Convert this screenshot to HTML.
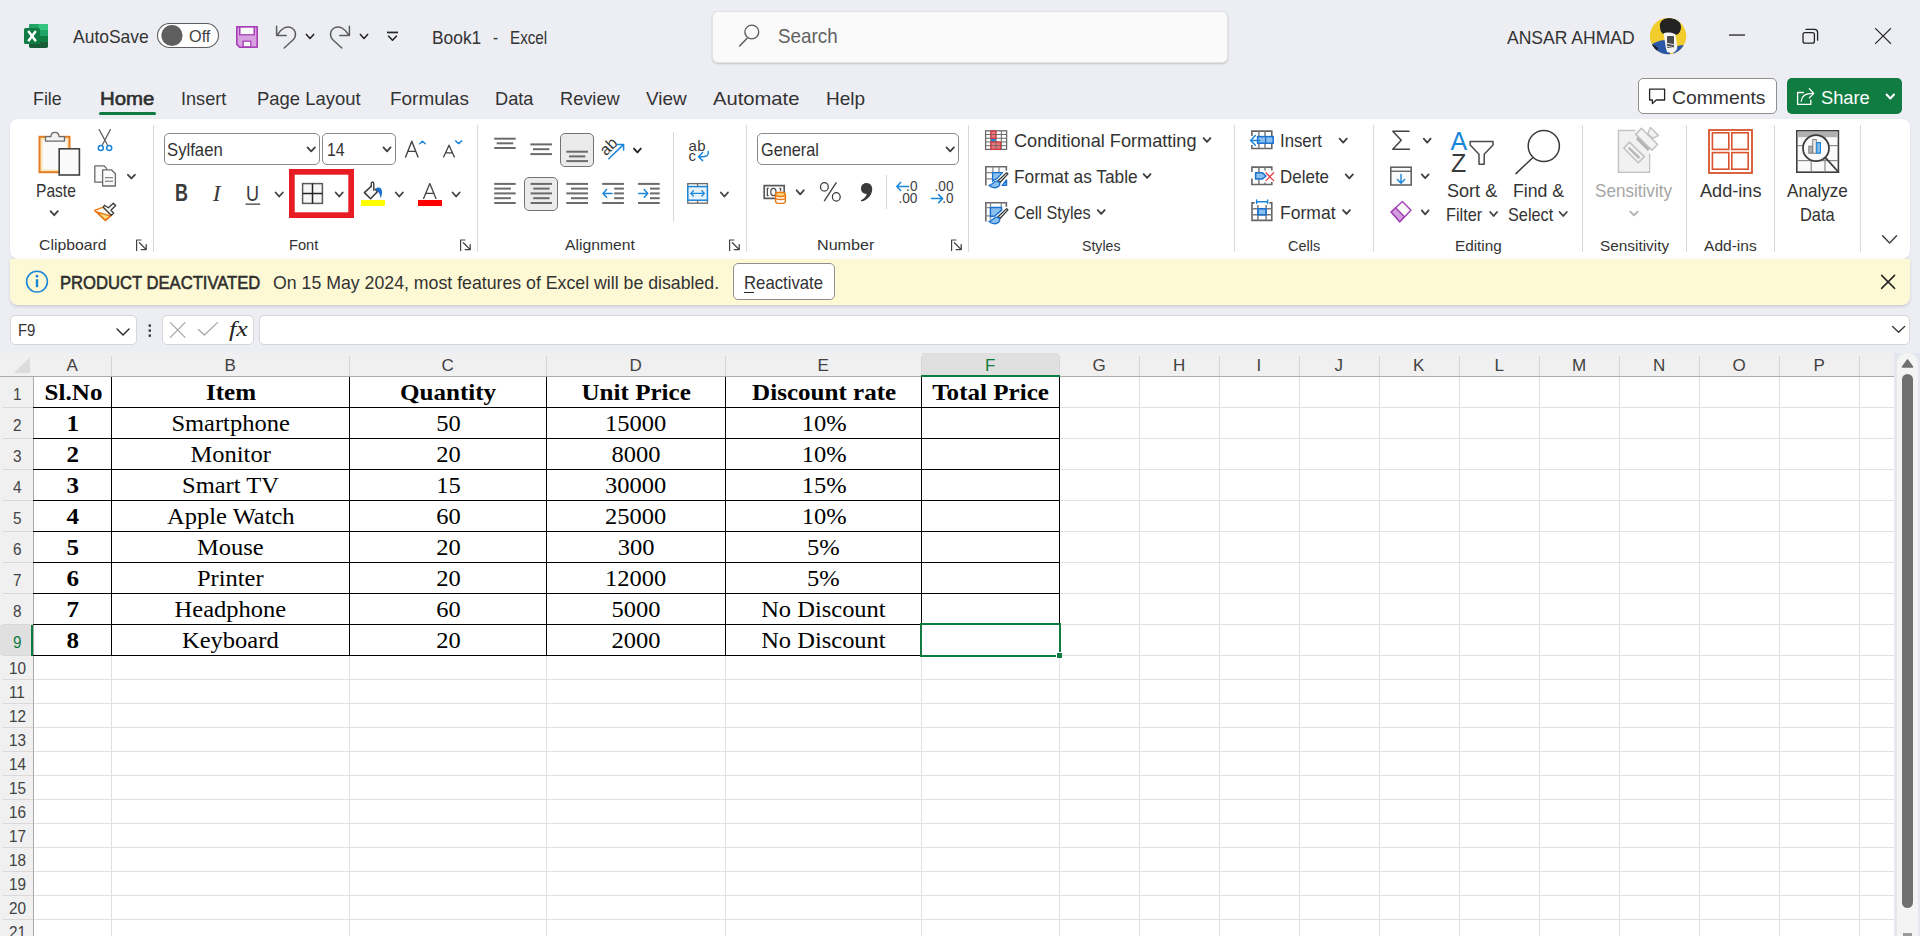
<!DOCTYPE html>
<html><head><meta charset="utf-8"><title>Book1 - Excel</title>
<style>
html,body{margin:0;padding:0;}
body{width:1920px;height:936px;overflow:hidden;position:relative;background:#edeef3;font-family:"Liberation Sans",sans-serif;}
#bg div{position:absolute;box-sizing:border-box;}
.t{position:absolute;white-space:pre;}
svg{position:absolute;left:0;top:0;}
</style></head><body>
<div id="bg">
<div style="left:712px;top:11px;width:516px;height:52px;background:#fafafa;border:1px solid #e3e3e3;border-radius:6px;box-shadow:0 1px 2px rgba(0,0,0,0.18);"></div>
<div style="left:1638px;top:78px;width:139px;height:36px;background:#fff;border:1px solid #8f8f8f;border-radius:5px;"></div>
<div style="left:1787px;top:78px;width:115px;height:36px;background:#107c41;border-radius:5px;"></div>
<div style="left:10px;top:119px;width:1900px;height:140px;background:#fff;border-radius:8px;box-shadow:0 1px 2px rgba(0,0,0,0.10);"></div>
<div style="left:10px;top:259px;width:1900px;height:46px;background:#fef9d5;border-radius:0 0 8px 8px;box-shadow:0 1.5px 3px rgba(0,0,0,0.13);"></div>
<div style="left:733px;top:263px;width:102px;height:37px;background:#fff;border:1px solid #8f8f8f;border-radius:5px;"></div>
<div style="left:10px;top:315px;width:127px;height:30px;background:#fff;border:1px solid #d6d6d6;border-radius:5px;"></div>
<div style="left:162px;top:315px;width:92px;height:30px;background:#fff;border:1px solid #d6d6d6;border-radius:5px;"></div>
<div style="left:259px;top:315px;width:1651px;height:30px;background:#fff;border:1px solid #d6d6d6;border-radius:5px;"></div>
<div style="left:1894px;top:353px;width:26px;height:583px;background:#e4e8ee;"></div>
<div style="left:1897px;top:353px;width:21px;height:583px;background:#f4f4f4;border-radius:10px 10px 0 0;"></div>
<div style="left:1902px;top:374px;width:11px;height:534px;background:#707070;border-radius:6px;"></div>
<div style="left:164px;top:133px;width:156px;height:32px;background:#fff;border:1px solid #8a8a8a;border-radius:5px;"></div>
<div style="left:322px;top:133px;width:74px;height:32px;background:#fff;border:1px solid #8a8a8a;border-radius:5px;"></div>
<div style="left:560px;top:133px;width:34px;height:34px;background:#ebebeb;border:1px solid #737373;border-radius:5px;"></div>
<div style="left:524px;top:177px;width:34px;height:34px;background:#ebebeb;border:1px solid #737373;border-radius:5px;"></div>
<div style="left:757px;top:133px;width:202px;height:32px;background:#fff;border:1px solid #8a8a8a;border-radius:5px;"></div>
</div>
<svg width="1920" height="936" viewBox="0 0 1920 936">
<rect x="0" y="353" width="1894" height="23" fill="#f0f0f0" />
<rect x="0" y="377" width="33" height="559" fill="#f0f0f0" />
<rect x="34" y="377" width="1860" height="559" fill="#ffffff" />
<rect x="922" y="353" width="137" height="22" fill="#e0e0e0" />
<rect x="0" y="625" width="32" height="30" fill="#e0e0e0" />
<path d="M30 357 L30 373 L14 373 Z" fill="#dcdcdc"/>
<rect x="111" y="377" width="1" height="559" fill="#e1e1e1" />
<rect x="111" y="356" width="1" height="20" fill="#d6d6d6" />
<rect x="349" y="377" width="1" height="559" fill="#e1e1e1" />
<rect x="349" y="356" width="1" height="20" fill="#d6d6d6" />
<rect x="546" y="377" width="1" height="559" fill="#e1e1e1" />
<rect x="546" y="356" width="1" height="20" fill="#d6d6d6" />
<rect x="725" y="377" width="1" height="559" fill="#e1e1e1" />
<rect x="725" y="356" width="1" height="20" fill="#d6d6d6" />
<rect x="921" y="377" width="1" height="559" fill="#e1e1e1" />
<rect x="921" y="356" width="1" height="20" fill="#d6d6d6" />
<rect x="1059" y="377" width="1" height="559" fill="#e1e1e1" />
<rect x="1059" y="356" width="1" height="20" fill="#d6d6d6" />
<rect x="1139" y="377" width="1" height="559" fill="#e1e1e1" />
<rect x="1139" y="356" width="1" height="20" fill="#d6d6d6" />
<rect x="1219" y="377" width="1" height="559" fill="#e1e1e1" />
<rect x="1219" y="356" width="1" height="20" fill="#d6d6d6" />
<rect x="1299" y="377" width="1" height="559" fill="#e1e1e1" />
<rect x="1299" y="356" width="1" height="20" fill="#d6d6d6" />
<rect x="1379" y="377" width="1" height="559" fill="#e1e1e1" />
<rect x="1379" y="356" width="1" height="20" fill="#d6d6d6" />
<rect x="1459" y="377" width="1" height="559" fill="#e1e1e1" />
<rect x="1459" y="356" width="1" height="20" fill="#d6d6d6" />
<rect x="1539" y="377" width="1" height="559" fill="#e1e1e1" />
<rect x="1539" y="356" width="1" height="20" fill="#d6d6d6" />
<rect x="1619" y="377" width="1" height="559" fill="#e1e1e1" />
<rect x="1619" y="356" width="1" height="20" fill="#d6d6d6" />
<rect x="1699" y="377" width="1" height="559" fill="#e1e1e1" />
<rect x="1699" y="356" width="1" height="20" fill="#d6d6d6" />
<rect x="1779" y="377" width="1" height="559" fill="#e1e1e1" />
<rect x="1779" y="356" width="1" height="20" fill="#d6d6d6" />
<rect x="1859" y="377" width="1" height="559" fill="#e1e1e1" />
<rect x="1859" y="356" width="1" height="20" fill="#d6d6d6" />
<rect x="34" y="407" width="1860" height="1" fill="#e1e1e1" />
<rect x="3" y="407" width="30" height="1" fill="#d9d9d9" />
<rect x="34" y="438" width="1860" height="1" fill="#e1e1e1" />
<rect x="3" y="438" width="30" height="1" fill="#d9d9d9" />
<rect x="34" y="469" width="1860" height="1" fill="#e1e1e1" />
<rect x="3" y="469" width="30" height="1" fill="#d9d9d9" />
<rect x="34" y="500" width="1860" height="1" fill="#e1e1e1" />
<rect x="3" y="500" width="30" height="1" fill="#d9d9d9" />
<rect x="34" y="531" width="1860" height="1" fill="#e1e1e1" />
<rect x="3" y="531" width="30" height="1" fill="#d9d9d9" />
<rect x="34" y="562" width="1860" height="1" fill="#e1e1e1" />
<rect x="3" y="562" width="30" height="1" fill="#d9d9d9" />
<rect x="34" y="593" width="1860" height="1" fill="#e1e1e1" />
<rect x="3" y="593" width="30" height="1" fill="#d9d9d9" />
<rect x="34" y="624" width="1860" height="1" fill="#e1e1e1" />
<rect x="3" y="624" width="30" height="1" fill="#d9d9d9" />
<rect x="34" y="655" width="1860" height="1" fill="#e1e1e1" />
<rect x="3" y="655" width="30" height="1" fill="#d9d9d9" />
<rect x="34" y="679" width="1860" height="1" fill="#e1e1e1" />
<rect x="3" y="679" width="30" height="1" fill="#d9d9d9" />
<rect x="34" y="703" width="1860" height="1" fill="#e1e1e1" />
<rect x="3" y="703" width="30" height="1" fill="#d9d9d9" />
<rect x="34" y="727" width="1860" height="1" fill="#e1e1e1" />
<rect x="3" y="727" width="30" height="1" fill="#d9d9d9" />
<rect x="34" y="751" width="1860" height="1" fill="#e1e1e1" />
<rect x="3" y="751" width="30" height="1" fill="#d9d9d9" />
<rect x="34" y="775" width="1860" height="1" fill="#e1e1e1" />
<rect x="3" y="775" width="30" height="1" fill="#d9d9d9" />
<rect x="34" y="799" width="1860" height="1" fill="#e1e1e1" />
<rect x="3" y="799" width="30" height="1" fill="#d9d9d9" />
<rect x="34" y="823" width="1860" height="1" fill="#e1e1e1" />
<rect x="3" y="823" width="30" height="1" fill="#d9d9d9" />
<rect x="34" y="847" width="1860" height="1" fill="#e1e1e1" />
<rect x="3" y="847" width="30" height="1" fill="#d9d9d9" />
<rect x="34" y="871" width="1860" height="1" fill="#e1e1e1" />
<rect x="3" y="871" width="30" height="1" fill="#d9d9d9" />
<rect x="34" y="895" width="1860" height="1" fill="#e1e1e1" />
<rect x="3" y="895" width="30" height="1" fill="#d9d9d9" />
<rect x="34" y="919" width="1860" height="1" fill="#e1e1e1" />
<rect x="3" y="919" width="30" height="1" fill="#d9d9d9" />
<rect x="0" y="376" width="1894" height="1" fill="#ababab" />
<rect x="33" y="376" width="1" height="560" fill="#ababab" />
<rect x="111" y="377" width="1" height="279" fill="#000" />
<rect x="349" y="377" width="1" height="279" fill="#000" />
<rect x="546" y="377" width="1" height="279" fill="#000" />
<rect x="725" y="377" width="1" height="279" fill="#000" />
<rect x="921" y="377" width="1" height="279" fill="#000" />
<rect x="1059" y="377" width="1" height="279" fill="#000" />
<rect x="33" y="407" width="1027" height="1" fill="#000" />
<rect x="33" y="438" width="1027" height="1" fill="#000" />
<rect x="33" y="469" width="1027" height="1" fill="#000" />
<rect x="33" y="500" width="1027" height="1" fill="#000" />
<rect x="33" y="531" width="1027" height="1" fill="#000" />
<rect x="33" y="562" width="1027" height="1" fill="#000" />
<rect x="33" y="593" width="1027" height="1" fill="#000" />
<rect x="33" y="624" width="1027" height="1" fill="#000" />
<rect x="33" y="655" width="1027" height="1" fill="#000" />
<rect x="921" y="375" width="139" height="2" fill="#107c41" />
<rect x="31" y="625" width="2" height="31" fill="#107c41" />
<rect x="921" y="624" width="139" height="32" fill="none" stroke="#107c41" stroke-width="2"/>
<rect x="1057" y="653" width="5" height="5" fill="#107c41" />
<rect x="1056" y="652" width="7" height="1" fill="#ffffff" />
<rect x="1056" y="652" width="1" height="7" fill="#ffffff" />
<path d="M1907.5 360 L1912.5 367 L1902.5 367 Z" fill="#707070" stroke="#707070" stroke-width="1.6" stroke-linejoin="round"/>
<rect x="1903" y="933" width="9" height="3" fill="#9a9a9a" />
<rect x="99" y="112" width="57" height="3" fill="#107c41" rx="1.5"/>
<rect x="744" y="292" width="10" height="1" fill="#242424" />
<rect x="29" y="24" width="19" height="24" rx="1.8" fill="#185c37"/>
<path d="M30.8 24 H46.2 C47.2 24 48 24.8 48 25.8 V30 H29 V25.8 C29 24.8 29.8 24 30.8 24 Z" fill="#21a366"/>
<path d="M38.6 24 H46.2 C47.2 24 48 24.8 48 25.8 V30 H38.6 Z" fill="#33c481"/>
<rect x="29" y="30" width="19" height="6" fill="#21a366"/>
<rect x="29" y="36" width="19" height="6" fill="#107c41"/>
<rect x="24" y="28" width="16" height="16" rx="1.6" fill="#107c41"/>
<path d="M28.2 31 L35.9 41.2 M35.9 31 L28.2 41.2" stroke="#fff" stroke-width="2.5" stroke-linecap="butt"/>
<rect x="157.5" y="23.5" width="61" height="24" rx="12" fill="#fff" stroke="#5e5e5e" stroke-width="1.1"/>
<circle cx="172" cy="35.5" r="10.6" fill="#5f5f5f"/>
<path d="M236.8 26.8 H257.2 V47.2 H239.6 L236.8 44.4 Z" fill="#d8a1df" stroke="#a63db6" stroke-width="1.6" stroke-linejoin="round"/>
<rect x="240.8" y="27.6" width="12.4" height="6.6" fill="#fafafa"/>
<rect x="239.6" y="26.8" width="14.8" height="8" fill="none" stroke="#a63db6" stroke-width="1.2"/>
<rect x="242.4" y="40.6" width="9" height="6.6" fill="#a63db6"/>
<rect x="243.8" y="41.8" width="6.4" height="4.4" fill="#fafafa"/>
<path d="M276.6 26.2 V35.4 H286.2 M277.6 34.6 C281.5 28.2 287 25.6 291.2 27.6 C296.4 30.2 296.6 36.4 293.2 39.8 L284.2 48" fill="none" stroke="#5c5c5c" stroke-width="1.5" stroke-linecap="round" stroke-linejoin="round" />
<g transform="translate(626,0) scale(-1,1)"><path d="M276.6 26.2 V35.4 H286.2 M277.6 34.6 C281.5 28.2 287 25.6 291.2 27.6 C296.4 30.2 296.6 36.4 293.2 39.8 L284.2 48" fill="none" stroke="#5c5c5c" stroke-width="1.5" stroke-linecap="round" stroke-linejoin="round"/></g>
<path d="M306.39 34.40 L310.00 38.40 L313.61 34.40" fill="none" stroke="#242424" stroke-width="1.56" stroke-linecap="round" stroke-linejoin="round"/>
<path d="M360.39 34.40 L364.00 38.40 L367.61 34.40" fill="none" stroke="#242424" stroke-width="1.56" stroke-linecap="round" stroke-linejoin="round"/>
<rect x="387" y="31.6" width="11" height="1.7" fill="#242424"/>
<path d="M388.63 36.20 L392.50 40.20 L396.37 36.20" fill="none" stroke="#242424" stroke-width="1.56" stroke-linecap="round" stroke-linejoin="round"/>
<circle cx="751.8" cy="32" r="6.9" fill="none" stroke="#5c5c5c" stroke-width="1.4"/>
<path d="M739.6 46 L746.9 38.5" fill="none" stroke="#5c5c5c" stroke-width="1.5" stroke-linecap="round" stroke-linejoin="round" />
<clipPath id="av"><circle cx="1668.1" cy="36.1" r="18.2"/></clipPath>
<g clip-path="url(#av)"><rect x="1649" y="17" width="38" height="38" fill="#f2cb2c"/><path d="M1650 45 C1654 43 1660 40 1665 40 L1671 56 L1650 56 Z" fill="#2c56a8"/><path d="M1650 45 C1652 44 1655 45 1658 48 L1656 56 L1650 56 Z" fill="#1c1c2a"/><path d="M1674 47 C1678 45.5 1682 45 1686 45.5 L1687 56 L1673 56 Z" fill="#2c56a8"/><path d="M1660 27 C1659 21 1664 18 1670 18 C1677 18 1681 22 1681 27 C1681 32 1678 35 1675 35 C1672 33 1666 33 1663 34 C1661 32 1660 30 1660 27 Z" fill="#232323"/><path d="M1663.5 33.5 C1666 32 1672 32 1675.5 34.5 L1677 45 C1678 49 1676 52 1672 53 L1667 52 C1665 46 1665 40 1663.5 33.5 Z" fill="#f4f4f4"/><rect x="1667" y="36" width="7" height="12" rx="1" fill="#4a4a4a"/><path d="M1666 43 L1675 45 M1666 46 L1675 48" stroke="#dcdcdc" stroke-width="1.2"/></g>
<rect x="1729" y="34.4" width="16" height="1.3" fill="#242424"/>
<rect x="1803" y="32.6" width="11.4" height="10.6" rx="2" fill="none" stroke="#242424" stroke-width="1.3"/>
<path d="M1806 29.4 H1814.6 C1816.6 29.4 1817.6 30.6 1817.6 32.4 V40.2" fill="none" stroke="#242424" stroke-width="1.3" stroke-linecap="round" stroke-linejoin="round" />
<path d="M1875.6 28.6 L1890.6 43.4 M1890.6 28.6 L1875.6 43.4" fill="none" stroke="#242424" stroke-width="1.3" stroke-linecap="round" stroke-linejoin="round" />
<path d="M1649.6 89.2 H1664.6 V100 H1656.2 L1652.4 103.6 V100 H1649.6 Z" fill="none" stroke="#242424" stroke-width="1.3" stroke-linecap="round" stroke-linejoin="round" />
<path d="M1803.5 92.5 H1797.6 V104.4 H1810.8 V100.2" fill="none" stroke="#fff" stroke-width="1.3" stroke-linecap="round" stroke-linejoin="round" />
<path d="M1801.2 101.2 C1801.6 95.8 1805.4 93.4 1812.6 93.4" fill="none" stroke="#fff" stroke-width="1.3" stroke-linecap="round" stroke-linejoin="round" />
<path d="M1809.4 88.8 L1813.8 93.4 L1809.4 97.8" fill="none" stroke="#fff" stroke-width="1.3" stroke-linecap="round" stroke-linejoin="round" />
<path d="M1886.60 94.50 L1890.30 98.50 L1894.00 94.50" fill="none" stroke="#fff" stroke-width="1.95" stroke-linecap="round" stroke-linejoin="round"/>
<rect x="39.5" y="136.8" width="30" height="35.4" fill="#fde6b8" stroke="#e27c22" stroke-width="2"/>
<rect x="42.6" y="139.8" width="24" height="29.6" fill="#fafafa"/>
<path d="M45.5 141.2 V136.6 H51 C51 131 59 131 59 136.6 H64.5 V141.2 Z" fill="#f2f2f2" stroke="#6a6a6a" stroke-width="1.3" stroke-linejoin="round"/>
<rect x="59.2" y="148.8" width="20.2" height="26.2" fill="#fafafa" stroke="#424242" stroke-width="1.6"/>
<path d="M50.59 211.20 L54.20 215.20 L57.81 211.20" fill="none" stroke="#424242" stroke-width="1.82" stroke-linecap="round" stroke-linejoin="round"/>
<path d="M99.2 129.6 L107.6 145.2 M110.4 129.6 L102.2 145.2" fill="none" stroke="#5c5c5c" stroke-width="1.2" stroke-linecap="round" stroke-linejoin="round" />
<circle cx="100.8" cy="147.9" r="2.5" fill="none" stroke="#1a86d9" stroke-width="1.5"/>
<circle cx="109.2" cy="147.9" r="2.5" fill="none" stroke="#1a86d9" stroke-width="1.5"/>
<path d="M102 182.2 H94.8 V165.8 H104 L106.6 168.4 V170" fill="#fafafa" stroke="#6a6a6a" stroke-width="1.3" stroke-linejoin="round"/>
<path d="M102.6 169.8 H111.4 L115.4 173.8 V186 H102.6 Z" fill="#fafafa" stroke="#6a6a6a" stroke-width="1.3" stroke-linejoin="round"/>
<rect x="105" y="177" width="8" height="1.3" fill="#8a8a8a"/><rect x="105" y="180.6" width="8" height="1.3" fill="#8a8a8a"/>
<path d="M127.96 174.76 L131.40 178.44 L134.84 174.76" fill="none" stroke="#424242" stroke-width="1.82" stroke-linecap="round" stroke-linejoin="round"/>
<path d="M94.6 210.4 L103.3 207.2 L111.4 215.4 L105.3 220.6 Z" fill="#fdfdfd" stroke="#e8780f" stroke-width="1.4" stroke-linejoin="round"/>
<path d="M96.6 212 L110.4 215.8 L105.4 220 Z" fill="#fbe08a" stroke="#e8780f" stroke-width="1.3" stroke-linejoin="round"/>
<path d="M103.3 207.2 L104.4 205.2 L108.4 207.8 L113.3 203.2 L115.7 205.5 L110.9 210.3 L113.6 213 L111.4 215.4 Z" fill="#fafafa" stroke="#3a3a3a" stroke-width="1.3" stroke-linejoin="round"/>
<path d="M136.6 250.6 V240.0 H141" fill="none" stroke="#424242" stroke-width="1.2" stroke-linecap="round" stroke-linejoin="round" />
<path d="M139.4 242.8 L146.2 249.6 M146.2 244.6 V249.6 H141.2" fill="none" stroke="#424242" stroke-width="1.3" stroke-linecap="round" stroke-linejoin="round" />
<rect x="153" y="125" width="1" height="127" fill="#d9d9d9"/>
<path d="M307.50 147.40 L311.20 151.40 L314.90 147.40" fill="none" stroke="#424242" stroke-width="1.82" stroke-linecap="round" stroke-linejoin="round"/>
<path d="M383.47 147.40 L387.00 151.40 L390.53 147.40" fill="none" stroke="#424242" stroke-width="1.82" stroke-linecap="round" stroke-linejoin="round"/>
<path d="M405.6 157 L411.8 141.2 L418 157 M407.9 151.4 H415.7" fill="none" stroke="#424242" stroke-width="1.4" stroke-linecap="round" stroke-linejoin="round" />
<path d="M419.7 143.8 L422.5 141.2 L425.3 143.8" fill="none" stroke="#1a86d9" stroke-width="1.4" stroke-linecap="round" stroke-linejoin="round" />
<path d="M443.6 157 L449 145.2 L454.4 157 M445.5 152.8 H452.5" fill="none" stroke="#424242" stroke-width="1.3" stroke-linecap="round" stroke-linejoin="round" />
<path d="M455.6 140.9 L458.7 143.6 L461.8 140.9" fill="none" stroke="#1a86d9" stroke-width="1.4" stroke-linecap="round" stroke-linejoin="round" />
<rect x="245.6" y="203.4" width="14.6" height="1.5" fill="#5c5c5c"/>
<path d="M275.59 192.50 L279.20 196.50 L282.81 192.50" fill="none" stroke="#424242" stroke-width="1.82" stroke-linecap="round" stroke-linejoin="round"/>
<rect x="291.85" y="171.85" width="59.3" height="43.3" fill="none" stroke="#e81c25" stroke-width="5.7"/>
<rect x="302.6" y="183.6" width="19.8" height="19.8" fill="#f7f7f7" stroke="#5a5a5a" stroke-width="1.5"/>
<path d="M312.5 183.6 V203.4 M302.6 193.5 H322.4" stroke="#242424" stroke-width="1.5"/>
<path d="M335.67 192.50 L339.20 196.50 L342.73 192.50" fill="none" stroke="#424242" stroke-width="1.82" stroke-linecap="round" stroke-linejoin="round"/>
<path d="M371.2 186.2 L364.4 192.6 L370.6 198.8 L377.6 191.6 L375 189" fill="#f7f7f7" stroke="#3a3a3a" stroke-width="1.5" stroke-linejoin="round"/>
<path d="M371.2 186.8 V183.8 C371.2 181.4 373.8 181.4 373.8 183.8 V190.2" fill="none" stroke="#3a3a3a" stroke-width="1.4" stroke-linecap="round" stroke-linejoin="round" />
<path d="M375.4 188.8 C378.2 186.6 381.4 187.4 382 191 C382.2 194 381.4 196.6 380.6 198.2 C380.2 195 379.2 192.6 377.2 191 Z" fill="#1a6fd0"/>
<rect x="361" y="200" width="24" height="6" fill="#ffff00" />
<path d="M395.77 192.50 L399.30 196.50 L402.83 192.50" fill="none" stroke="#424242" stroke-width="1.82" stroke-linecap="round" stroke-linejoin="round"/>
<path d="M423.6 198.4 L429.8 183.6 L436 198.4 M425.8 193.4 H433.8" fill="none" stroke="#424242" stroke-width="1.3" stroke-linecap="round" stroke-linejoin="round" />
<rect x="418" y="200" width="24" height="6" fill="#ff0000" />
<path d="M452.57 192.50 L456.10 196.50 L459.63 192.50" fill="none" stroke="#424242" stroke-width="1.82" stroke-linecap="round" stroke-linejoin="round"/>
<path d="M460.6 250.6 V240.0 H465" fill="none" stroke="#424242" stroke-width="1.2" stroke-linecap="round" stroke-linejoin="round" />
<path d="M463.4 242.8 L470.2 249.6 M470.2 244.6 V249.6 H465.2" fill="none" stroke="#424242" stroke-width="1.3" stroke-linecap="round" stroke-linejoin="round" />
<rect x="477" y="125" width="1" height="127" fill="#d9d9d9"/>
<rect x="494.2" y="137.7" width="21.500000000000057" height="2" fill="#6b6b6b"/>
<rect x="496.7" y="142.3" width="16.500000000000057" height="2" fill="#6b6b6b"/>
<rect x="494.2" y="147.0" width="21.500000000000057" height="2" fill="#6b6b6b"/>
<rect x="530.4" y="143.4" width="21.600000000000023" height="2" fill="#6b6b6b"/>
<rect x="533" y="148.2" width="16.399999999999977" height="2" fill="#6b6b6b"/>
<rect x="530.4" y="153.1" width="21.600000000000023" height="2" fill="#6b6b6b"/>
<rect x="566.3" y="150.7" width="21.700000000000045" height="2" fill="#6b6b6b"/>
<rect x="569" y="155.4" width="16.299999999999955" height="2" fill="#6b6b6b"/>
<rect x="566.3" y="160.1" width="21.700000000000045" height="2" fill="#6b6b6b"/>
<text x="0" y="0" font-family="Liberation Sans" font-size="16" fill="#3a3a3a" transform="translate(606,156.6) rotate(-45)">ab</text>
<path d="M608.8 158.8 L623.4 144.6 M617.6 144.4 H623.6 V150" fill="none" stroke="#1a86d9" stroke-width="1.5" stroke-linecap="round" stroke-linejoin="round" />
<path d="M633.96 148.58 L637.40 152.42 L640.84 148.58" fill="none" stroke="#242424" stroke-width="1.82" stroke-linecap="round" stroke-linejoin="round"/>
<rect x="494.2" y="182.9" width="21.500000000000057" height="2" fill="#6b6b6b"/>
<rect x="566.3" y="182.9" width="21.700000000000045" height="2" fill="#6b6b6b"/>
<rect x="494.2" y="187.6" width="16.69999999999999" height="2" fill="#6b6b6b"/>
<rect x="571" y="187.6" width="17" height="2" fill="#6b6b6b"/>
<rect x="494.2" y="192.4" width="21.500000000000057" height="2" fill="#6b6b6b"/>
<rect x="566.3" y="192.4" width="21.700000000000045" height="2" fill="#6b6b6b"/>
<rect x="494.2" y="197.2" width="16.69999999999999" height="2" fill="#6b6b6b"/>
<rect x="571" y="197.2" width="17" height="2" fill="#6b6b6b"/>
<rect x="494.2" y="202.0" width="21.500000000000057" height="2" fill="#6b6b6b"/>
<rect x="566.3" y="202.0" width="21.700000000000045" height="2" fill="#6b6b6b"/>
<rect x="530.6" y="182.9" width="21.399999999999977" height="2" fill="#6b6b6b"/>
<rect x="533.2" y="187.6" width="16.399999999999977" height="2" fill="#6b6b6b"/>
<rect x="530.6" y="192.4" width="21.399999999999977" height="2" fill="#6b6b6b"/>
<rect x="533.2" y="197.2" width="16.399999999999977" height="2" fill="#6b6b6b"/>
<rect x="530.6" y="202.0" width="21.399999999999977" height="2" fill="#6b6b6b"/>
<rect x="602.2" y="182.9" width="21.700000000000045" height="2" fill="#6b6b6b"/>
<rect x="602.2" y="202.0" width="21.700000000000045" height="2" fill="#6b6b6b"/>
<rect x="614.2" y="187.6" width="9.700000000000045" height="2" fill="#6b6b6b"/>
<rect x="614.2" y="192.4" width="9.700000000000045" height="2" fill="#6b6b6b"/>
<rect x="614.2" y="197.2" width="9.700000000000045" height="2" fill="#6b6b6b"/>
<path d="M603.0 193.4 H612.0 M606.6 189.6 L603.0 193.4 L606.6 197.2" fill="none" stroke="#1a86d9" stroke-width="1.5" stroke-linecap="round" stroke-linejoin="round" />
<rect x="638" y="182.9" width="21.700000000000045" height="2" fill="#6b6b6b"/>
<rect x="638" y="202.0" width="21.700000000000045" height="2" fill="#6b6b6b"/>
<rect x="650" y="187.6" width="9.700000000000045" height="2" fill="#6b6b6b"/>
<rect x="650" y="192.4" width="9.700000000000045" height="2" fill="#6b6b6b"/>
<rect x="650" y="197.2" width="9.700000000000045" height="2" fill="#6b6b6b"/>
<path d="M638.8 193.4 H647.8 M644.2 189.6 L647.8 193.4 L644.2 197.2" fill="none" stroke="#1a86d9" stroke-width="1.5" stroke-linecap="round" stroke-linejoin="round" />
<rect x="673" y="132" width="1" height="90" fill="#d9d9d9"/>
<text x="688.4" y="150.7" font-family="Liberation Sans" font-size="15" fill="#3a3a3a" letter-spacing="0.6">ab</text>
<text x="688.4" y="160.7" font-family="Liberation Sans" font-size="15" fill="#3a3a3a">c</text>
<path d="M708.3 151.4 C708.8 155.4 706.4 156.7 702 156.7 H699.4 M702.6 152.6 L698.6 156.7 L702.6 160.6" fill="none" stroke="#1a86d9" stroke-width="1.5" stroke-linecap="round" stroke-linejoin="round" />
<rect x="687.8" y="183.6" width="19.6" height="19.6" fill="#fafafa" stroke="#6a6a6a" stroke-width="1.3"/>
<rect x="687.8" y="186.6" width="19.6" height="13.6" fill="#eaf3fb" stroke="#1a86d9" stroke-width="1.5"/>
<path d="M697.6 183.6 V186.6 M697.6 200.2 V203.2" stroke="#6a6a6a" stroke-width="1.3"/>
<path d="M690.8 193.4 H704.4 M693.4 190.8 L690.8 193.4 L693.4 196 M701.8 190.8 L704.4 193.4 L701.8 196" fill="none" stroke="#1a86d9" stroke-width="1.3" stroke-linecap="round" stroke-linejoin="round" />
<path d="M720.87 192.50 L724.40 196.50 L727.93 192.50" fill="none" stroke="#424242" stroke-width="1.82" stroke-linecap="round" stroke-linejoin="round"/>
<path d="M729.6 250.6 V240.0 H734" fill="none" stroke="#424242" stroke-width="1.2" stroke-linecap="round" stroke-linejoin="round" />
<path d="M732.4 242.8 L739.2 249.6 M739.2 244.6 V249.6 H734.2" fill="none" stroke="#424242" stroke-width="1.3" stroke-linecap="round" stroke-linejoin="round" />
<rect x="746" y="125" width="1" height="127" fill="#d9d9d9"/>
<path d="M946.50 147.40 L950.20 151.40 L953.90 147.40" fill="none" stroke="#424242" stroke-width="1.82" stroke-linecap="round" stroke-linejoin="round"/>
<rect x="764.2" y="185.6" width="20" height="12.8" fill="#fafafa" stroke="#5a5a5a" stroke-width="1.7"/>
<g fill="none" stroke="#4a4a4a" stroke-width="1.2"><path d="M768.6 188.4 H767.4 V195.6 H768.6"/><ellipse cx="773.4" cy="192" rx="2.6" ry="3.6"/><path d="M779.4 188.4 H780.6 V191"/></g>
<g stroke="#e8780f" stroke-width="1.4"><path d="M775.6 194.4 V201.4 C775.6 204 785.4 204 785.4 201.4 V194.4" fill="#fff"/><path d="M775.6 197.8 C775.6 200 785.4 200 785.4 197.8" fill="none"/><ellipse cx="780.5" cy="194.4" rx="4.9" ry="2.1" fill="#fbd27a"/></g>
<path d="M796.67 190.30 L800.20 194.30 L803.73 190.30" fill="none" stroke="#424242" stroke-width="1.82" stroke-linecap="round" stroke-linejoin="round"/>
<g fill="none" stroke="#3a3a3a" stroke-width="1.25"><ellipse cx="824.4" cy="186.9" rx="3.9" ry="4.2"/><ellipse cx="836.3" cy="196.9" rx="3.9" ry="4.2"/><path d="M836.4 182.4 L824.2 201.2"/></g>
<path d="M866.4 183 C870.6 183 872.4 186.4 872.2 189.4 C871.8 195.6 867.2 200 861.4 201.6 L860.8 200.2 C864.2 198.6 866.2 196.4 866.8 194 C863.6 194.2 861 192 861 188.6 C861 185.2 863.4 183 866.4 183 Z" fill="#3a3a3a"/>
<rect x="886" y="175" width="1" height="34" fill="#d9d9d9"/>
<text x="906.1" y="190.8" textLength="11.4" font-family="Liberation Sans" font-size="15" fill="#3e3e3e" lengthAdjust="spacingAndGlyphs">.0</text>
<text x="898.4" y="203" textLength="19.1" font-family="Liberation Sans" font-size="15" fill="#3e3e3e" lengthAdjust="spacingAndGlyphs">.00</text>
<path d="M896.8 186.4 H908.6 M900.6 182.4 L896.8 186.4 L900.6 190.4" fill="none" stroke="#1a86d9" stroke-width="1.5" stroke-linecap="round" stroke-linejoin="round" />
<text x="934.5" y="190.8" textLength="19" font-family="Liberation Sans" font-size="15" fill="#3e3e3e" lengthAdjust="spacingAndGlyphs">.00</text>
<text x="942.2" y="203" textLength="11.3" font-family="Liberation Sans" font-size="15" fill="#3e3e3e" lengthAdjust="spacingAndGlyphs">.0</text>
<path d="M931.4 198.6 H942.6 M938.6 194.6 L942.6 198.6 L938.6 202.6" fill="none" stroke="#1a86d9" stroke-width="1.5" stroke-linecap="round" stroke-linejoin="round" />
<path d="M951.6 250.6 V240.0 H956" fill="none" stroke="#424242" stroke-width="1.2" stroke-linecap="round" stroke-linejoin="round" />
<path d="M954.4 242.8 L961.2 249.6 M961.2 244.6 V249.6 H956.2" fill="none" stroke="#424242" stroke-width="1.3" stroke-linecap="round" stroke-linejoin="round" />
<rect x="968" y="125" width="1" height="127" fill="#d9d9d9"/>
<rect x="990.8" y="131" width="5" height="7.4" fill="#f4747a"/>
<rect x="990.8" y="138.4" width="5" height="3.6" fill="#1a86d9"/>
<rect x="990.8" y="142" width="9.6" height="7.4" fill="#f4747a"/>
<rect x="985.6" y="130.8" width="21" height="18.6" fill="none" stroke="#6a6a6a" stroke-width="1.3"/><path d="M990.85 130.8 V149.4" stroke="#6a6a6a" stroke-width="1"/><path d="M996.10 130.8 V149.4" stroke="#6a6a6a" stroke-width="1"/><path d="M1001.35 130.8 V149.4" stroke="#6a6a6a" stroke-width="1"/><path d="M985.6 134.52 H1006.6" stroke="#6a6a6a" stroke-width="1"/><path d="M985.6 138.24 H1006.6" stroke="#6a6a6a" stroke-width="1"/><path d="M985.6 141.96 H1006.6" stroke="#6a6a6a" stroke-width="1"/><path d="M985.6 145.68 H1006.6" stroke="#6a6a6a" stroke-width="1"/>
<rect x="990.8" y="131" width="5" height="7.4" fill="none" stroke="#e0323a" stroke-width="1"/>
<rect x="990.8" y="142" width="9.6" height="7.4" fill="none" stroke="#e0323a" stroke-width="1"/>
<path d="M1203.56 138.08 L1207.00 141.92 L1210.44 138.08" fill="none" stroke="#424242" stroke-width="1.82" stroke-linecap="round" stroke-linejoin="round"/>
<path d="M985.85 185.56 V166.81 H1006.36 V170.65" fill="none" stroke="#6a6a6a" stroke-width="1.6"/>
<path d="M985.85 172.58 H992.26 M985.85 178.83 H992.26 M992.90 166.81 V172.26 M998.99 166.81 V172.26" stroke="#8a8a8a" stroke-width="1.3"/>
<path d="M992.58 172.58 L1002.51 172.58 L997.06 178.67 L994.18 179.95 L992.58 181.23 Z" fill="#8cc0ec" stroke="#1a6fd0" stroke-width="1.3" stroke-linejoin="round"/>
<path d="M1002.19 185.40 L1006.52 179.95 L1006.52 185.40 Z" fill="#8cc0ec" stroke="#1a6fd0" stroke-width="1.4" stroke-linejoin="round"/>
<path d="M998.03 180.75 L1006.68 172.58 L1007.96 173.86 L999.95 182.51 Z" fill="#fafafa" stroke="#2e2e2e" stroke-width="1.2" stroke-linejoin="round"/>
<path d="M988.89 185.40 C992.58 185.08 993.54 180.91 997.06 181.23 C999.95 181.55 1000.59 184.44 998.67 186.36 C996.10 188.60 991.62 187.96 988.89 185.40 Z" fill="#8cc0ec" stroke="#1a6fd0" stroke-width="1.3" stroke-linejoin="round"/>
<path d="M1143.66 174.08 L1147.10 177.92 L1150.54 174.08" fill="none" stroke="#424242" stroke-width="1.82" stroke-linecap="round" stroke-linejoin="round"/>
<path d="M985.85 221.56 V202.81 H1006.36 V206.65" fill="none" stroke="#6a6a6a" stroke-width="1.6"/>
<path d="M985.85 207.62 H990.01 M985.85 215.79 H990.01 M990.49 202.81 V207.29 M1001.23 202.81 V207.29 M990.49 217.23 V219.79" stroke="#8a8a8a" stroke-width="1.3"/>
<path d="M990.40 207.62 L1001.55 207.62 L1001.55 210.18 L994.82 215.95 L990.40 216.59 Z" fill="#8cc0ec" stroke="#1a6fd0" stroke-width="1.5" stroke-linejoin="round"/>
<path d="M998.03 216.75 L1006.68 208.58 L1007.96 209.86 L999.95 218.51 Z" fill="#fafafa" stroke="#2e2e2e" stroke-width="1.2" stroke-linejoin="round"/>
<path d="M988.89 221.40 C992.58 221.08 993.54 216.91 997.06 217.23 C999.95 217.55 1000.59 220.44 998.67 222.36 C996.10 224.60 991.62 223.96 988.89 221.40 Z" fill="#8cc0ec" stroke="#1a6fd0" stroke-width="1.3" stroke-linejoin="round"/>
<path d="M1097.76 210.08 L1101.20 213.92 L1104.64 210.08" fill="none" stroke="#424242" stroke-width="1.82" stroke-linecap="round" stroke-linejoin="round"/>
<rect x="1234" y="125" width="1" height="127" fill="#d9d9d9"/>
<path d="M1251.9 136 V131.1 H1271.8 V148.5 H1251.9 V145" fill="none" stroke="#666666" stroke-width="1.6"/>
<path d="M1258.9 131.1 V136.2 M1265 131.1 V136.2 M1258.9 143.6 V148.5 M1265 143.6 V148.5" stroke="#7a7a7a" stroke-width="1.5"/>
<rect x="1257.6" y="136.6" width="15.6" height="6.6" fill="#8cc0ec" stroke="#1a6fd0" stroke-width="1.5"/>
<path d="M1265.6 136.6 V143.2" stroke="#1a6fd0" stroke-width="1.3"/>
<path d="M1250.6 140.5 H1259.8 M1255.4 135.6 L1250.6 140.5 L1255.4 145.3" fill="none" stroke="#1a86d9" stroke-width="1.5" stroke-linecap="round" stroke-linejoin="round" />
<path d="M1339.59 138.60 L1343.20 142.60 L1346.81 138.60" fill="none" stroke="#424242" stroke-width="1.82" stroke-linecap="round" stroke-linejoin="round"/>
<path d="M1251.9 172 V167.1 H1271.8 V170.6 M1271.8 182 V184.5 H1251.9 V178.4" fill="none" stroke="#666666" stroke-width="1.6"/>
<path d="M1258.9 167.1 V172.5 M1265 167.1 V170.6 M1258.9 179.3 V184.5 M1265 182.4 V184.5" stroke="#7a7a7a" stroke-width="1.5"/>
<path d="M1255.6 172.8 H1262.4 L1266 176 L1262.4 179 H1255.6 Z" fill="#8cc0ec" stroke="#1a6fd0" stroke-width="1.5" stroke-linejoin="round"/>
<path d="M1266 172.8 L1273.6 180.6 M1273.6 172.8 L1266 180.6" fill="none" stroke="#e8404a" stroke-width="1.3" stroke-linecap="round" stroke-linejoin="round" />
<path d="M1345.69 174.40 L1349.30 178.40 L1352.91 174.40" fill="none" stroke="#424242" stroke-width="1.82" stroke-linecap="round" stroke-linejoin="round"/>
<path d="M1254.6 202.9 H1252 V220.4 H1271.8 V202.9 H1269.4" fill="none" stroke="#666666" stroke-width="1.6"/>
<path d="M1257.9 205 V220.4 M1266.1 205 V220.4 M1252 208.8 H1271.8 M1252 214.8 H1271.8" stroke="#7a7a7a" stroke-width="1.5"/>
<rect x="1258" y="208.8" width="8" height="6" fill="#8cc0ec" stroke="#1a6fd0" stroke-width="1.6"/>
<path d="M1256.6 201.8 H1267.6 M1256.6 200 V203.6 M1267.6 200 V203.6" fill="none" stroke="#1a86d9" stroke-width="1.4" stroke-linecap="round" stroke-linejoin="round" />
<path d="M1343.06 210.08 L1346.50 213.92 L1349.94 210.08" fill="none" stroke="#424242" stroke-width="1.82" stroke-linecap="round" stroke-linejoin="round"/>
<rect x="1373" y="125" width="1" height="127" fill="#d9d9d9"/>
<path d="M1409 131.2 H1392.8 L1401.2 140.2 L1392.8 149.2 H1409.4" fill="none" stroke="#424242" stroke-width="1.5" stroke-linecap="round" stroke-linejoin="round" />
<path d="M1423.76 138.68 L1427.20 142.52 L1430.64 138.68" fill="none" stroke="#424242" stroke-width="1.82" stroke-linecap="round" stroke-linejoin="round"/>
<rect x="1390.8" y="167.2" width="20.4" height="17.8" fill="#fafafa" stroke="#5a5a5a" stroke-width="1.5"/>
<rect x="1390.8" y="170.6" width="20.4" height="1.3" fill="#5a5a5a"/>
<path d="M1401 174.4 V183 M1397.4 179.6 L1401 183.2 L1404.6 179.6" fill="none" stroke="#1a86d9" stroke-width="1.4" stroke-linecap="round" stroke-linejoin="round" />
<path d="M1421.76 174.36 L1425.20 178.04 L1428.64 174.36" fill="none" stroke="#424242" stroke-width="1.82" stroke-linecap="round" stroke-linejoin="round"/>
<path d="M1391.2 212 L1402.4 201.4 L1411 210.2 L1399.8 221.8 Z" fill="#fafafa" stroke="#a33fb6" stroke-width="1.4" stroke-linejoin="round"/>
<path d="M1391.2 212 L1395.6 207.8 L1404.2 216.6 L1399.8 221.8 Z" fill="#d39cdc" stroke="#a33fb6" stroke-width="1.4" stroke-linejoin="round"/>
<path d="M1421.76 210.40 L1425.20 214.40 L1428.64 210.40" fill="none" stroke="#424242" stroke-width="1.82" stroke-linecap="round" stroke-linejoin="round"/>
<text x="1450.6" y="150" font-family="Liberation Sans" font-size="25" fill="#1a86d9" letter-spacing="0">A</text>
<text x="1451" y="171.6" font-family="Liberation Sans" font-size="25" fill="#3a3a3a">Z</text>
<path d="M1470.2 141.6 H1493 V145 L1484.2 154.2 V164.2 H1479 V154.2 L1470.2 145 Z" fill="none" stroke="#4a4a4a" stroke-width="1.5" stroke-linecap="round" stroke-linejoin="round" />
<path d="M1490.16 212.00 L1493.60 216.00 L1497.04 212.00" fill="none" stroke="#424242" stroke-width="1.82" stroke-linecap="round" stroke-linejoin="round"/>
<circle cx="1543.8" cy="146" r="15.6" fill="none" stroke="#3a3a3a" stroke-width="1.5"/>
<path d="M1516 173.6 L1532.4 158" fill="none" stroke="#3a3a3a" stroke-width="1.5" stroke-linecap="round" stroke-linejoin="round" />
<path d="M1559.59 212.00 L1563.20 216.00 L1566.81 212.00" fill="none" stroke="#424242" stroke-width="1.82" stroke-linecap="round" stroke-linejoin="round"/>
<rect x="1582" y="125" width="1" height="127" fill="#d9d9d9"/>
<path d="M1635.4 130.6 H1618.6 V172.2 H1649.4 V153.4" fill="none" stroke="#c2c2c2" stroke-width="1.7"/>
<path d="M1619.4 131.4 H1634 L1649 146 V171.4 H1619.4 Z" fill="#f1f1f1"/>
<path d="M1623.8 148.3 L1629.3 142.2 L1644.3 156.6 L1638.3 162.7 Z" fill="#f3f3f3" stroke="#c2c2c2" stroke-width="1.6" stroke-linejoin="round"/>
<path d="M1628.6 147.6 L1639.4 158" stroke="#b8b8b8" stroke-width="2.6"/>
<path d="M1635.7 134.4 L1641.4 128.3 L1657.6 144.5 L1651.8 150.3 Z" fill="#f3f3f3" stroke="#c2c2c2" stroke-width="1.6" stroke-linejoin="round"/>
<path d="M1636.8 138 L1648.8 150" stroke="#b4b4b4" stroke-width="2.8"/>
<path d="M1647.8 133.5 L1650.4 127.5 L1658.5 135.6 L1652.4 138.2 Z" fill="#f3f3f3" stroke="#c2c2c2" stroke-width="1.5" stroke-linejoin="round"/>
<path d="M1630.22 211.56 L1634.00 215.24 L1637.78 211.56" fill="none" stroke="#b4b4b4" stroke-width="1.82" stroke-linecap="round" stroke-linejoin="round"/>
<rect x="1686" y="125" width="1" height="127" fill="#d9d9d9"/>
<rect x="1709" y="130" width="43" height="43" fill="none" stroke="#d9532c" stroke-width="1.8"/>
<rect x="1712.4" y="132.8" width="16.4" height="16.6" fill="none" stroke="#d9532c" stroke-width="1.6"/>
<rect x="1731.8" y="132.8" width="16.4" height="16.6" fill="none" stroke="#d9532c" stroke-width="1.6"/>
<rect x="1712.4" y="152.6" width="16.4" height="16.6" fill="none" stroke="#d9532c" stroke-width="1.6"/>
<rect x="1731.8" y="152.6" width="16.4" height="16.6" fill="none" stroke="#d9532c" stroke-width="1.6"/>
<rect x="1774" y="125" width="1" height="127" fill="#d9d9d9"/>
<rect x="1796.8" y="130.8" width="41.6" height="41.4" fill="#fafafa" stroke="#3e3e3e" stroke-width="1.6"/>
<rect x="1797.6" y="131.6" width="40" height="5.6" fill="#b0b0b0"/>
<rect x="1797" y="145" width="41" height="1.2" fill="#8a8a8a"/>
<rect x="1797" y="160" width="41" height="1.2" fill="#8a8a8a"/>
<rect x="1810.6" y="137" width="1.2" height="35" fill="#8a8a8a"/>
<rect x="1824.4" y="137" width="1.2" height="35" fill="#8a8a8a"/>
<circle cx="1816" cy="148.2" r="13" fill="#fafafa" stroke="#3e3e3e" stroke-width="1.8"/>
<rect x="1808.8" y="146.2" width="3.4" height="7" fill="#b8b8b8" stroke="#7a7a7a" stroke-width="1"/>
<rect x="1812.8" y="139.6" width="3.4" height="13.6" fill="#f4f4f4" stroke="#7a7a7a" stroke-width="1"/>
<rect x="1816.8" y="142.6" width="3.6" height="10.6" fill="#8cc2ee" stroke="#1a86d9" stroke-width="1.2"/>
<path d="M1825.4 157.6 L1838.4 172" fill="none" stroke="#3e3e3e" stroke-width="1.8" stroke-linecap="round" stroke-linejoin="round" />
<rect x="1860" y="125" width="1" height="127" fill="#d9d9d9"/>
<path d="M1882.6 235.8 L1889.6 243 L1896.6 235.8" fill="none" stroke="#424242" stroke-width="1.5" stroke-linecap="round" stroke-linejoin="round" />
<circle cx="37" cy="281.6" r="10.4" fill="none" stroke="#1a86d9" stroke-width="1.6"/>
<rect x="35.8" y="279.2" width="2.4" height="8" fill="#1a86d9"/><circle cx="37" cy="276.2" r="1.4" fill="#1a86d9"/>
<path d="M1881.6 275.4 L1894.6 288.4 M1894.6 275.4 L1881.6 288.4" fill="none" stroke="#242424" stroke-width="1.5" stroke-linecap="round" stroke-linejoin="round" />
<path d="M117 329 L123 335 L129 329" fill="none" stroke="#242424" stroke-width="1.4" stroke-linecap="round" stroke-linejoin="round" />
<rect x="148.6" y="324.40000000000003" width="2.4" height="2.4" fill="#3a3a3a"/>
<rect x="148.6" y="329.40000000000003" width="2.4" height="2.4" fill="#3a3a3a"/>
<rect x="148.6" y="334.40000000000003" width="2.4" height="2.4" fill="#3a3a3a"/>
<path d="M170.4 322.6 L185 337.4 M185 322.6 L170.4 337.4" fill="none" stroke="#a8a8a8" stroke-width="1.3" stroke-linecap="round" stroke-linejoin="round" />
<path d="M198.4 329.4 L204.4 335 L217.4 322.6" fill="none" stroke="#a8a8a8" stroke-width="1.3" stroke-linecap="round" stroke-linejoin="round" />
<path d="M1892.6 326.4 L1898.6 332.2 L1904.6 326.4" fill="none" stroke="#3a3a3a" stroke-width="1.4" stroke-linecap="round" stroke-linejoin="round" />
</svg>
<div class="t" style="left:66.50px;top:357px;font-size:17px;line-height:17px;color:#424242;font-family:'Liberation Sans', sans-serif;">A</div>
<div class="t" style="left:224.50px;top:357px;font-size:17px;line-height:17px;color:#424242;font-family:'Liberation Sans', sans-serif;">B</div>
<div class="t" style="left:441.50px;top:357px;font-size:17px;line-height:17px;color:#424242;font-family:'Liberation Sans', sans-serif;">C</div>
<div class="t" style="left:629.50px;top:357px;font-size:17px;line-height:17px;color:#424242;font-family:'Liberation Sans', sans-serif;">D</div>
<div class="t" style="left:817.50px;top:357px;font-size:17px;line-height:17px;color:#424242;font-family:'Liberation Sans', sans-serif;">E</div>
<div class="t" style="left:985.00px;top:357px;font-size:17px;line-height:17px;color:#107c41;font-family:'Liberation Sans', sans-serif;">F</div>
<div class="t" style="left:1092.50px;top:357px;font-size:17px;line-height:17px;color:#424242;font-family:'Liberation Sans', sans-serif;">G</div>
<div class="t" style="left:1173.00px;top:357px;font-size:17px;line-height:17px;color:#424242;font-family:'Liberation Sans', sans-serif;">H</div>
<div class="t" style="left:1256.50px;top:357px;font-size:17px;line-height:17px;color:#424242;font-family:'Liberation Sans', sans-serif;">I</div>
<div class="t" style="left:1334.50px;top:357px;font-size:17px;line-height:17px;color:#424242;font-family:'Liberation Sans', sans-serif;">J</div>
<div class="t" style="left:1413.00px;top:357px;font-size:17px;line-height:17px;color:#424242;font-family:'Liberation Sans', sans-serif;">K</div>
<div class="t" style="left:1494.50px;top:357px;font-size:17px;line-height:17px;color:#424242;font-family:'Liberation Sans', sans-serif;">L</div>
<div class="t" style="left:1572.00px;top:357px;font-size:17px;line-height:17px;color:#424242;font-family:'Liberation Sans', sans-serif;">M</div>
<div class="t" style="left:1653.00px;top:357px;font-size:17px;line-height:17px;color:#424242;font-family:'Liberation Sans', sans-serif;">N</div>
<div class="t" style="left:1732.50px;top:357px;font-size:17px;line-height:17px;color:#424242;font-family:'Liberation Sans', sans-serif;">O</div>
<div class="t" style="left:1813.50px;top:357px;font-size:17px;line-height:17px;color:#424242;font-family:'Liberation Sans', sans-serif;">P</div>
<div class="t" style="left:13.15px;top:386px;font-size:17px;line-height:17px;color:#424242;font-family:'Liberation Sans', sans-serif;transform:scaleX(0.9000);transform-origin:0px 0;">1</div>
<div class="t" style="left:13.15px;top:417px;font-size:17px;line-height:17px;color:#424242;font-family:'Liberation Sans', sans-serif;transform:scaleX(0.9000);transform-origin:0px 0;">2</div>
<div class="t" style="left:13.15px;top:448px;font-size:17px;line-height:17px;color:#424242;font-family:'Liberation Sans', sans-serif;transform:scaleX(0.9000);transform-origin:0px 0;">3</div>
<div class="t" style="left:13.15px;top:479px;font-size:17px;line-height:17px;color:#424242;font-family:'Liberation Sans', sans-serif;transform:scaleX(0.9000);transform-origin:0px 0;">4</div>
<div class="t" style="left:13.15px;top:510px;font-size:17px;line-height:17px;color:#424242;font-family:'Liberation Sans', sans-serif;transform:scaleX(0.9000);transform-origin:0px 0;">5</div>
<div class="t" style="left:13.15px;top:541px;font-size:17px;line-height:17px;color:#424242;font-family:'Liberation Sans', sans-serif;transform:scaleX(0.9000);transform-origin:0px 0;">6</div>
<div class="t" style="left:13.15px;top:572px;font-size:17px;line-height:17px;color:#424242;font-family:'Liberation Sans', sans-serif;transform:scaleX(0.9000);transform-origin:0px 0;">7</div>
<div class="t" style="left:13.15px;top:603px;font-size:17px;line-height:17px;color:#424242;font-family:'Liberation Sans', sans-serif;transform:scaleX(0.9000);transform-origin:0px 0;">8</div>
<div class="t" style="left:13.15px;top:634px;font-size:17px;line-height:17px;color:#107c41;font-family:'Liberation Sans', sans-serif;transform:scaleX(0.9000);transform-origin:0px 0;">9</div>
<div class="t" style="left:8.65px;top:660px;font-size:17px;line-height:17px;color:#424242;font-family:'Liberation Sans', sans-serif;transform:scaleX(0.9000);transform-origin:0px 0;">10</div>
<div class="t" style="left:9.10px;top:684px;font-size:17px;line-height:17px;color:#424242;font-family:'Liberation Sans', sans-serif;transform:scaleX(0.9000);transform-origin:0px 0;">11</div>
<div class="t" style="left:8.65px;top:708px;font-size:17px;line-height:17px;color:#424242;font-family:'Liberation Sans', sans-serif;transform:scaleX(0.9000);transform-origin:0px 0;">12</div>
<div class="t" style="left:8.65px;top:732px;font-size:17px;line-height:17px;color:#424242;font-family:'Liberation Sans', sans-serif;transform:scaleX(0.9000);transform-origin:0px 0;">13</div>
<div class="t" style="left:8.65px;top:756px;font-size:17px;line-height:17px;color:#424242;font-family:'Liberation Sans', sans-serif;transform:scaleX(0.9000);transform-origin:0px 0;">14</div>
<div class="t" style="left:8.65px;top:780px;font-size:17px;line-height:17px;color:#424242;font-family:'Liberation Sans', sans-serif;transform:scaleX(0.9000);transform-origin:0px 0;">15</div>
<div class="t" style="left:8.65px;top:804px;font-size:17px;line-height:17px;color:#424242;font-family:'Liberation Sans', sans-serif;transform:scaleX(0.9000);transform-origin:0px 0;">16</div>
<div class="t" style="left:8.65px;top:828px;font-size:17px;line-height:17px;color:#424242;font-family:'Liberation Sans', sans-serif;transform:scaleX(0.9000);transform-origin:0px 0;">17</div>
<div class="t" style="left:8.65px;top:852px;font-size:17px;line-height:17px;color:#424242;font-family:'Liberation Sans', sans-serif;transform:scaleX(0.9000);transform-origin:0px 0;">18</div>
<div class="t" style="left:8.65px;top:876px;font-size:17px;line-height:17px;color:#424242;font-family:'Liberation Sans', sans-serif;transform:scaleX(0.9000);transform-origin:0px 0;">19</div>
<div class="t" style="left:8.65px;top:900px;font-size:17px;line-height:17px;color:#424242;font-family:'Liberation Sans', sans-serif;transform:scaleX(0.9000);transform-origin:0px 0;">20</div>
<div class="t" style="left:8.65px;top:924px;font-size:17px;line-height:17px;color:#424242;font-family:'Liberation Sans', sans-serif;transform:scaleX(0.9000);transform-origin:0px 0;">21</div>
<div class="t" style="left:46.50px;top:381px;font-size:23px;line-height:23px;font-family:'Liberation Serif',serif;color:#000;font-weight:700;transform:scaleX(1.09);transform-origin:26.50px 0">Sl.No</div>
<div class="t" style="left:207.50px;top:381px;font-size:23px;line-height:23px;font-family:'Liberation Serif',serif;color:#000;font-weight:700;transform:scaleX(1.09);transform-origin:23.00px 0">Item</div>
<div class="t" style="left:403.50px;top:381px;font-size:23px;line-height:23px;font-family:'Liberation Serif',serif;color:#000;font-weight:700;transform:scaleX(1.09);transform-origin:44.50px 0">Quantity</div>
<div class="t" style="left:586.00px;top:381px;font-size:23px;line-height:23px;font-family:'Liberation Serif',serif;color:#000;font-weight:700;transform:scaleX(1.09);transform-origin:50.00px 0">Unit Price</div>
<div class="t" style="left:757.50px;top:381px;font-size:23px;line-height:23px;font-family:'Liberation Serif',serif;color:#000;font-weight:700;transform:scaleX(1.09);transform-origin:66.00px 0">Discount rate</div>
<div class="t" style="left:937.00px;top:381px;font-size:23px;line-height:23px;font-family:'Liberation Serif',serif;color:#000;font-weight:700;transform:scaleX(1.09);transform-origin:53.50px 0">Total Price</div>
<div class="t" style="left:67.00px;top:412px;font-size:23px;line-height:23px;font-family:'Liberation Serif',serif;color:#000;font-weight:700;transform:scaleX(1.09);transform-origin:6.00px 0">1</div>
<div class="t" style="left:175.00px;top:412px;font-size:23px;line-height:23px;font-family:'Liberation Serif',serif;color:#000;font-weight:400;transform:scaleX(1.065);transform-origin:55.50px 0">Smartphone</div>
<div class="t" style="left:436.50px;top:412px;font-size:23px;line-height:23px;font-family:'Liberation Serif',serif;color:#000;font-weight:400;transform:scaleX(1.065);transform-origin:11.50px 0">50</div>
<div class="t" style="left:607.00px;top:412px;font-size:23px;line-height:23px;font-family:'Liberation Serif',serif;color:#000;font-weight:400;transform:scaleX(1.065);transform-origin:29.00px 0">15000</div>
<div class="t" style="left:802.50px;top:412px;font-size:23px;line-height:23px;font-family:'Liberation Serif',serif;color:#000;font-weight:400;transform:scaleX(1.065);transform-origin:21.00px 0">10%</div>
<div class="t" style="left:67.00px;top:443px;font-size:23px;line-height:23px;font-family:'Liberation Serif',serif;color:#000;font-weight:700;transform:scaleX(1.09);transform-origin:6.00px 0">2</div>
<div class="t" style="left:192.50px;top:443px;font-size:23px;line-height:23px;font-family:'Liberation Serif',serif;color:#000;font-weight:400;transform:scaleX(1.065);transform-origin:38.00px 0">Monitor</div>
<div class="t" style="left:436.50px;top:443px;font-size:23px;line-height:23px;font-family:'Liberation Serif',serif;color:#000;font-weight:400;transform:scaleX(1.065);transform-origin:11.50px 0">20</div>
<div class="t" style="left:613.00px;top:443px;font-size:23px;line-height:23px;font-family:'Liberation Serif',serif;color:#000;font-weight:400;transform:scaleX(1.065);transform-origin:23.00px 0">8000</div>
<div class="t" style="left:802.50px;top:443px;font-size:23px;line-height:23px;font-family:'Liberation Serif',serif;color:#000;font-weight:400;transform:scaleX(1.065);transform-origin:21.00px 0">10%</div>
<div class="t" style="left:67.00px;top:474px;font-size:23px;line-height:23px;font-family:'Liberation Serif',serif;color:#000;font-weight:700;transform:scaleX(1.09);transform-origin:6.00px 0">3</div>
<div class="t" style="left:185.00px;top:474px;font-size:23px;line-height:23px;font-family:'Liberation Serif',serif;color:#000;font-weight:400;transform:scaleX(1.065);transform-origin:45.50px 0">Smart TV</div>
<div class="t" style="left:436.50px;top:474px;font-size:23px;line-height:23px;font-family:'Liberation Serif',serif;color:#000;font-weight:400;transform:scaleX(1.065);transform-origin:11.50px 0">15</div>
<div class="t" style="left:607.00px;top:474px;font-size:23px;line-height:23px;font-family:'Liberation Serif',serif;color:#000;font-weight:400;transform:scaleX(1.065);transform-origin:29.00px 0">30000</div>
<div class="t" style="left:802.50px;top:474px;font-size:23px;line-height:23px;font-family:'Liberation Serif',serif;color:#000;font-weight:400;transform:scaleX(1.065);transform-origin:21.00px 0">15%</div>
<div class="t" style="left:67.00px;top:505px;font-size:23px;line-height:23px;font-family:'Liberation Serif',serif;color:#000;font-weight:700;transform:scaleX(1.09);transform-origin:6.00px 0">4</div>
<div class="t" style="left:170.50px;top:505px;font-size:23px;line-height:23px;font-family:'Liberation Serif',serif;color:#000;font-weight:400;transform:scaleX(1.065);transform-origin:60.00px 0">Apple Watch</div>
<div class="t" style="left:436.50px;top:505px;font-size:23px;line-height:23px;font-family:'Liberation Serif',serif;color:#000;font-weight:400;transform:scaleX(1.065);transform-origin:11.50px 0">60</div>
<div class="t" style="left:607.00px;top:505px;font-size:23px;line-height:23px;font-family:'Liberation Serif',serif;color:#000;font-weight:400;transform:scaleX(1.065);transform-origin:29.00px 0">25000</div>
<div class="t" style="left:802.50px;top:505px;font-size:23px;line-height:23px;font-family:'Liberation Serif',serif;color:#000;font-weight:400;transform:scaleX(1.065);transform-origin:21.00px 0">10%</div>
<div class="t" style="left:67.00px;top:536px;font-size:23px;line-height:23px;font-family:'Liberation Serif',serif;color:#000;font-weight:700;transform:scaleX(1.09);transform-origin:6.00px 0">5</div>
<div class="t" style="left:199.00px;top:536px;font-size:23px;line-height:23px;font-family:'Liberation Serif',serif;color:#000;font-weight:400;transform:scaleX(1.065);transform-origin:31.50px 0">Mouse</div>
<div class="t" style="left:436.50px;top:536px;font-size:23px;line-height:23px;font-family:'Liberation Serif',serif;color:#000;font-weight:400;transform:scaleX(1.065);transform-origin:11.50px 0">20</div>
<div class="t" style="left:618.50px;top:536px;font-size:23px;line-height:23px;font-family:'Liberation Serif',serif;color:#000;font-weight:400;transform:scaleX(1.065);transform-origin:17.50px 0">300</div>
<div class="t" style="left:808.00px;top:536px;font-size:23px;line-height:23px;font-family:'Liberation Serif',serif;color:#000;font-weight:400;transform:scaleX(1.065);transform-origin:15.50px 0">5%</div>
<div class="t" style="left:67.00px;top:567px;font-size:23px;line-height:23px;font-family:'Liberation Serif',serif;color:#000;font-weight:700;transform:scaleX(1.09);transform-origin:6.00px 0">6</div>
<div class="t" style="left:199.00px;top:567px;font-size:23px;line-height:23px;font-family:'Liberation Serif',serif;color:#000;font-weight:400;transform:scaleX(1.065);transform-origin:31.50px 0">Printer</div>
<div class="t" style="left:436.50px;top:567px;font-size:23px;line-height:23px;font-family:'Liberation Serif',serif;color:#000;font-weight:400;transform:scaleX(1.065);transform-origin:11.50px 0">20</div>
<div class="t" style="left:607.00px;top:567px;font-size:23px;line-height:23px;font-family:'Liberation Serif',serif;color:#000;font-weight:400;transform:scaleX(1.065);transform-origin:29.00px 0">12000</div>
<div class="t" style="left:808.00px;top:567px;font-size:23px;line-height:23px;font-family:'Liberation Serif',serif;color:#000;font-weight:400;transform:scaleX(1.065);transform-origin:15.50px 0">5%</div>
<div class="t" style="left:67.00px;top:598px;font-size:23px;line-height:23px;font-family:'Liberation Serif',serif;color:#000;font-weight:700;transform:scaleX(1.09);transform-origin:6.00px 0">7</div>
<div class="t" style="left:178.00px;top:598px;font-size:23px;line-height:23px;font-family:'Liberation Serif',serif;color:#000;font-weight:400;transform:scaleX(1.065);transform-origin:52.50px 0">Headphone</div>
<div class="t" style="left:436.50px;top:598px;font-size:23px;line-height:23px;font-family:'Liberation Serif',serif;color:#000;font-weight:400;transform:scaleX(1.065);transform-origin:11.50px 0">60</div>
<div class="t" style="left:613.00px;top:598px;font-size:23px;line-height:23px;font-family:'Liberation Serif',serif;color:#000;font-weight:400;transform:scaleX(1.065);transform-origin:23.00px 0">5000</div>
<div class="t" style="left:764.50px;top:598px;font-size:23px;line-height:23px;font-family:'Liberation Serif',serif;color:#000;font-weight:400;transform:scaleX(1.065);transform-origin:59.00px 0">No Discount</div>
<div class="t" style="left:67.00px;top:629px;font-size:23px;line-height:23px;font-family:'Liberation Serif',serif;color:#000;font-weight:700;transform:scaleX(1.09);transform-origin:6.00px 0">8</div>
<div class="t" style="left:185.00px;top:629px;font-size:23px;line-height:23px;font-family:'Liberation Serif',serif;color:#000;font-weight:400;transform:scaleX(1.065);transform-origin:45.50px 0">Keyboard</div>
<div class="t" style="left:436.50px;top:629px;font-size:23px;line-height:23px;font-family:'Liberation Serif',serif;color:#000;font-weight:400;transform:scaleX(1.065);transform-origin:11.50px 0">20</div>
<div class="t" style="left:613.00px;top:629px;font-size:23px;line-height:23px;font-family:'Liberation Serif',serif;color:#000;font-weight:400;transform:scaleX(1.065);transform-origin:23.00px 0">2000</div>
<div class="t" style="left:764.50px;top:629px;font-size:23px;line-height:23px;font-family:'Liberation Serif',serif;color:#000;font-weight:400;transform:scaleX(1.065);transform-origin:59.00px 0">No Discount</div>
<div class="t" style="left:73.10px;top:28px;font-size:18.5px;line-height:18.5px;color:#333333;font-family:'Liberation Sans', sans-serif;transform:scaleX(0.9450);transform-origin:0px 0;">AutoSave</div>
<div class="t" style="left:189.00px;top:28px;font-size:17px;line-height:17px;color:#424242;font-family:'Liberation Sans', sans-serif;transform:scaleX(0.9565);transform-origin:0px 0;">Off</div>
<div class="t" style="left:431.60px;top:29px;font-size:18.5px;line-height:18.5px;color:#333333;font-family:'Liberation Sans', sans-serif;transform:scaleX(0.9385);transform-origin:0px 0;">Book1</div>
<div class="t" style="left:493.20px;top:29px;font-size:18.5px;line-height:18.5px;color:#333333;font-family:'Liberation Sans', sans-serif;transform:scaleX(0.8333);transform-origin:0px 0;">-</div>
<div class="t" style="left:510.00px;top:29px;font-size:18.5px;line-height:18.5px;color:#333333;font-family:'Liberation Sans', sans-serif;transform:scaleX(0.8222);transform-origin:0px 0;">Excel</div>
<div class="t" style="left:778.00px;top:25px;font-size:21px;line-height:21px;color:#616161;font-family:'Liberation Sans', sans-serif;transform:scaleX(0.8955);transform-origin:0px 0;">Search</div>
<div class="t" style="left:1507.30px;top:29px;font-size:18.5px;line-height:18.5px;color:#333333;font-family:'Liberation Sans', sans-serif;transform:scaleX(0.9481);transform-origin:0px 0;">ANSAR AHMAD</div>
<div class="t" style="left:32.70px;top:90px;font-size:18.5px;line-height:18.5px;color:#333333;font-family:'Liberation Sans', sans-serif;transform:scaleX(0.9633);transform-origin:0px 0;">File</div>
<div class="t" style="left:99.90px;top:90px;font-size:18.5px;line-height:18.5px;color:#333333;font-family:'Liberation Sans', sans-serif;transform:scaleX(1.1020);transform-origin:0px 0;-webkit-text-stroke:0.55px #242424;">Home</div>
<div class="t" style="left:180.80px;top:90px;font-size:18.5px;line-height:18.5px;color:#333333;font-family:'Liberation Sans', sans-serif;transform:scaleX(0.9787);transform-origin:0px 0;">Insert</div>
<div class="t" style="left:256.80px;top:90px;font-size:18.5px;line-height:18.5px;color:#333333;font-family:'Liberation Sans', sans-serif;transform:scaleX(0.9962);transform-origin:0px 0;">Page Layout</div>
<div class="t" style="left:390.00px;top:90px;font-size:18.5px;line-height:18.5px;color:#333333;font-family:'Liberation Sans', sans-serif;transform:scaleX(1.0227);transform-origin:0px 0;">Formulas</div>
<div class="t" style="left:495.00px;top:90px;font-size:18.5px;line-height:18.5px;color:#333333;font-family:'Liberation Sans', sans-serif;transform:scaleX(0.9850);transform-origin:0px 0;">Data</div>
<div class="t" style="left:560.00px;top:90px;font-size:18.5px;line-height:18.5px;color:#333333;font-family:'Liberation Sans', sans-serif;transform:scaleX(0.9836);transform-origin:0px 0;">Review</div>
<div class="t" style="left:645.50px;top:90px;font-size:18.5px;line-height:18.5px;color:#333333;font-family:'Liberation Sans', sans-serif;transform:scaleX(1.0225);transform-origin:0px 0;">View</div>
<div class="t" style="left:712.80px;top:90px;font-size:18.5px;line-height:18.5px;color:#333333;font-family:'Liberation Sans', sans-serif;transform:scaleX(1.0911);transform-origin:0px 0;">Automate</div>
<div class="t" style="left:826.10px;top:90px;font-size:18.5px;line-height:18.5px;color:#333333;font-family:'Liberation Sans', sans-serif;transform:scaleX(1.0263);transform-origin:0px 0;">Help</div>
<div class="t" style="left:1671.50px;top:89px;font-size:18.5px;line-height:18.5px;color:#333333;font-family:'Liberation Sans', sans-serif;transform:scaleX(1.0449);transform-origin:0px 0;">Comments</div>
<div class="t" style="left:1820.60px;top:89px;font-size:18.5px;line-height:18.5px;color:#ffffff;font-family:'Liberation Sans', sans-serif;transform:scaleX(0.9878);transform-origin:0px 0;">Share</div>
<div class="t" style="left:59.70px;top:274px;font-size:18.5px;line-height:18.5px;color:#333333;font-family:'Liberation Sans', sans-serif;transform:scaleX(0.8982);transform-origin:0px 0;-webkit-text-stroke:0.55px #242424;">PRODUCT DEACTIVATED</div>
<div class="t" style="left:273.10px;top:274px;font-size:18.5px;line-height:18.5px;color:#333333;font-family:'Liberation Sans', sans-serif;transform:scaleX(0.9577);transform-origin:0px 0;">On 15 May 2024, most features of Excel will be disabled.</div>
<div class="t" style="left:743.80px;top:274px;font-size:18.5px;line-height:18.5px;color:#333333;font-family:'Liberation Sans', sans-serif;transform:scaleX(0.9046);transform-origin:0px 0;">Reactivate</div>
<div class="t" style="left:17.50px;top:322px;font-size:17px;line-height:17px;color:#333333;font-family:'Liberation Sans', sans-serif;transform:scaleX(0.8750);transform-origin:0px 0;">F9</div>
<div class="t" style="left:228.70px;top:318px;font-size:22px;line-height:22px;color:#242424;font-family:'Liberation Serif', serif;transform:scaleX(1.1750);transform-origin:0px 0;font-style:italic;">fx</div>
<div class="t" style="left:36.00px;top:182px;font-size:18.5px;line-height:18.5px;color:#333333;font-family:'Liberation Sans', sans-serif;transform:scaleX(0.8426);transform-origin:0px 0;">Paste</div>
<div class="t" style="left:38.50px;top:237px;font-size:15px;line-height:15px;color:#333333;font-family:'Liberation Sans', sans-serif;transform:scaleX(1.0516);transform-origin:0px 0;">Clipboard</div>
<div class="t" style="left:167.40px;top:141px;font-size:18.5px;line-height:18.5px;color:#333333;font-family:'Liberation Sans', sans-serif;transform:scaleX(0.9032);transform-origin:0px 0;">Sylfaen</div>
<div class="t" style="left:326.50px;top:141px;font-size:18.5px;line-height:18.5px;color:#333333;font-family:'Liberation Sans', sans-serif;transform:scaleX(0.8571);transform-origin:0px 0;">14</div>
<div class="t" style="left:174.60px;top:182px;font-size:23.5px;line-height:23.5px;color:#3a3a3a;font-family:'Liberation Sans', sans-serif;transform:scaleX(0.7647);transform-origin:0px 0;font-weight:700;">B</div>
<div class="t" style="left:212.70px;top:182px;font-size:23.5px;line-height:23.5px;color:#3a3a3a;font-family:'Liberation Serif', serif;font-style:italic;">I</div>
<div class="t" style="left:246.40px;top:183px;font-size:22.5px;line-height:22.5px;color:#3a3a3a;font-family:'Liberation Sans', sans-serif;transform:scaleX(0.8000);transform-origin:0px 0;">U</div>
<div class="t" style="left:288.70px;top:237px;font-size:15px;line-height:15px;color:#333333;font-family:'Liberation Sans', sans-serif;transform:scaleX(0.9774);transform-origin:0px 0;">Font</div>
<div class="t" style="left:564.50px;top:237px;font-size:15px;line-height:15px;color:#333333;font-family:'Liberation Sans', sans-serif;transform:scaleX(1.0485);transform-origin:0px 0;">Alignment</div>
<div class="t" style="left:760.50px;top:141px;font-size:18.5px;line-height:18.5px;color:#333333;font-family:'Liberation Sans', sans-serif;transform:scaleX(0.8788);transform-origin:0px 0;">General</div>
<div class="t" style="left:816.50px;top:237px;font-size:15px;line-height:15px;color:#333333;font-family:'Liberation Sans', sans-serif;transform:scaleX(1.0755);transform-origin:0px 0;">Number</div>
<div class="t" style="left:1013.60px;top:132px;font-size:18.5px;line-height:18.5px;color:#333333;font-family:'Liberation Sans', sans-serif;transform:scaleX(0.9806);transform-origin:0px 0;">Conditional Formatting</div>
<div class="t" style="left:1013.60px;top:168px;font-size:18.5px;line-height:18.5px;color:#333333;font-family:'Liberation Sans', sans-serif;transform:scaleX(0.9348);transform-origin:0px 0;">Format as Table</div>
<div class="t" style="left:1013.60px;top:204px;font-size:18.5px;line-height:18.5px;color:#333333;font-family:'Liberation Sans', sans-serif;transform:scaleX(0.8770);transform-origin:0px 0;">Cell Styles</div>
<div class="t" style="left:1081.60px;top:238px;font-size:15px;line-height:15px;color:#333333;font-family:'Liberation Sans', sans-serif;transform:scaleX(0.9415);transform-origin:0px 0;">Styles</div>
<div class="t" style="left:1280.10px;top:132px;font-size:18.5px;line-height:18.5px;color:#333333;font-family:'Liberation Sans', sans-serif;transform:scaleX(0.9064);transform-origin:0px 0;">Insert</div>
<div class="t" style="left:1280.10px;top:168px;font-size:18.5px;line-height:18.5px;color:#333333;font-family:'Liberation Sans', sans-serif;transform:scaleX(0.9170);transform-origin:0px 0;">Delete</div>
<div class="t" style="left:1280.00px;top:204px;font-size:18.5px;line-height:18.5px;color:#333333;font-family:'Liberation Sans', sans-serif;transform:scaleX(0.9475);transform-origin:0px 0;">Format</div>
<div class="t" style="left:1287.60px;top:237.5px;font-size:15px;line-height:15px;color:#333333;font-family:'Liberation Sans', sans-serif;transform:scaleX(0.9636);transform-origin:0px 0;">Cells</div>
<div class="t" style="left:1446.70px;top:182px;font-size:18.5px;line-height:18.5px;color:#333333;font-family:'Liberation Sans', sans-serif;transform:scaleX(0.9769);transform-origin:0px 0;">Sort &amp;</div>
<div class="t" style="left:1446.20px;top:206px;font-size:18.5px;line-height:18.5px;color:#333333;font-family:'Liberation Sans', sans-serif;transform:scaleX(0.8810);transform-origin:0px 0;">Filter</div>
<div class="t" style="left:1512.80px;top:182px;font-size:18.5px;line-height:18.5px;color:#333333;font-family:'Liberation Sans', sans-serif;transform:scaleX(0.9556);transform-origin:0px 0;">Find &amp;</div>
<div class="t" style="left:1507.50px;top:206px;font-size:18.5px;line-height:18.5px;color:#333333;font-family:'Liberation Sans', sans-serif;transform:scaleX(0.8788);transform-origin:0px 0;">Select</div>
<div class="t" style="left:1454.70px;top:237.5px;font-size:15px;line-height:15px;color:#333333;font-family:'Liberation Sans', sans-serif;transform:scaleX(1.0196);transform-origin:0px 0;">Editing</div>
<div class="t" style="left:1595.40px;top:182px;font-size:18.5px;line-height:18.5px;color:#a6a6a6;font-family:'Liberation Sans', sans-serif;transform:scaleX(0.9250);transform-origin:0px 0;">Sensitivity</div>
<div class="t" style="left:1599.50px;top:237.5px;font-size:15px;line-height:15px;color:#333333;font-family:'Liberation Sans', sans-serif;transform:scaleX(1.0235);transform-origin:0px 0;">Sensitivity</div>
<div class="t" style="left:1699.60px;top:182px;font-size:18.5px;line-height:18.5px;color:#333333;font-family:'Liberation Sans', sans-serif;transform:scaleX(0.9810);transform-origin:0px 0;">Add-ins</div>
<div class="t" style="left:1703.70px;top:238px;font-size:15px;line-height:15px;color:#333333;font-family:'Liberation Sans', sans-serif;transform:scaleX(1.0373);transform-origin:0px 0;">Add-ins</div>
<div class="t" style="left:1787.40px;top:182px;font-size:18.5px;line-height:18.5px;color:#333333;font-family:'Liberation Sans', sans-serif;transform:scaleX(0.9242);transform-origin:0px 0;">Analyze</div>
<div class="t" style="left:1799.90px;top:206px;font-size:18.5px;line-height:18.5px;color:#333333;font-family:'Liberation Sans', sans-serif;transform:scaleX(0.8875);transform-origin:0px 0;">Data</div>
</body></html>
